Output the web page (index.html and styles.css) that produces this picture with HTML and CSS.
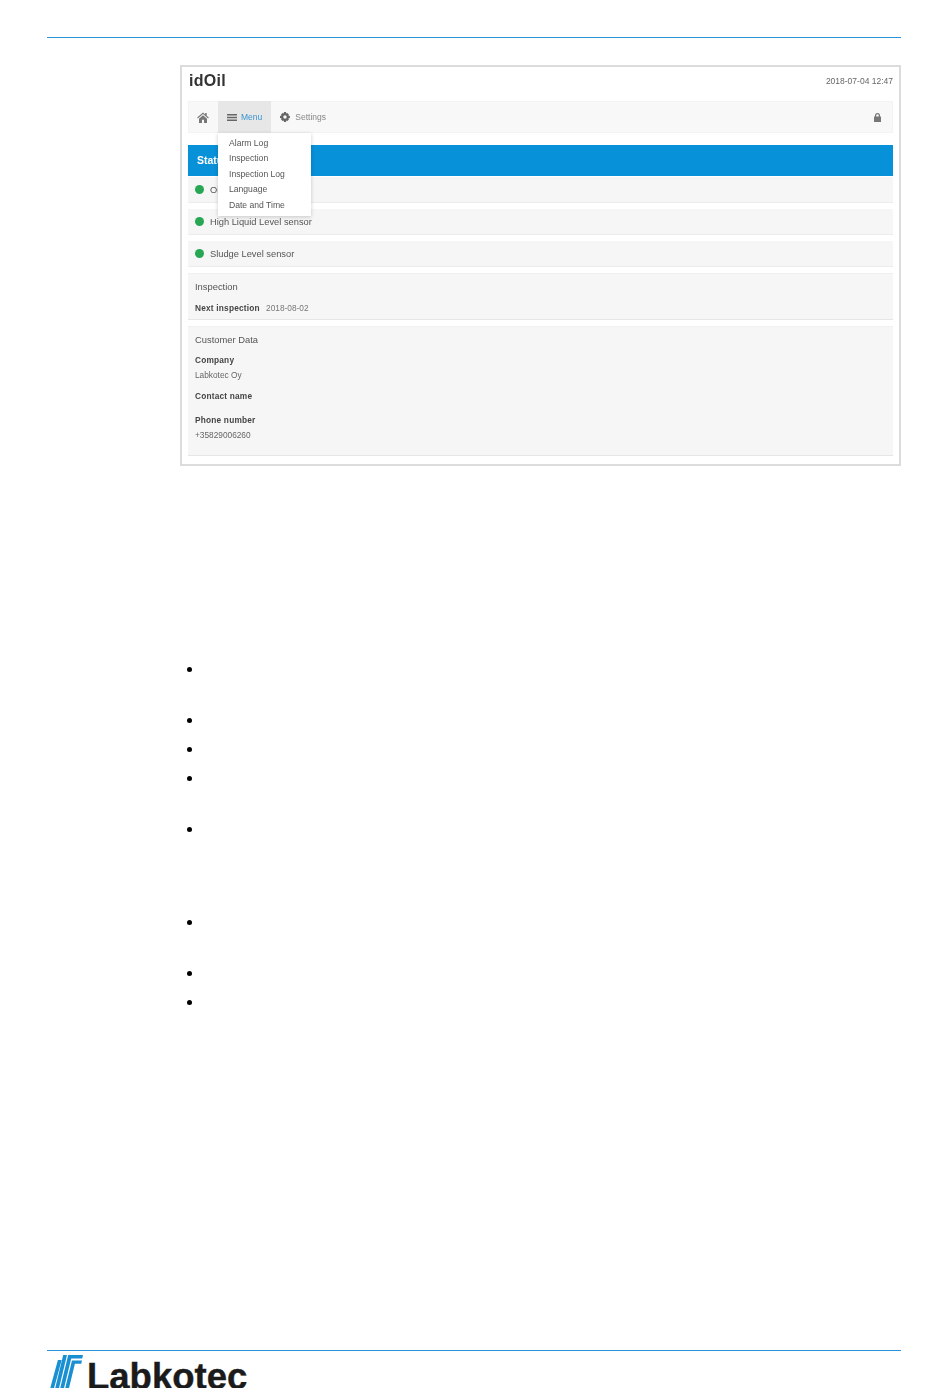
FILE: index.html
```html
<!DOCTYPE html>
<html lang="en">
<head>
    <meta charset="UTF-8">
    <meta name="viewport" content="width=device-width, initial-scale=1.0">
    <title>idOil</title>
    <link rel="stylesheet" href="styles.css">
</head>
<body>
    <div class="page">
        <div class="top-rule"></div>

        <div class="shot">
            <div class="shot-head">
                <span class="brand">idOil</span>
                <span class="clock">2018-07-04 12:47</span>
            </div>

            <div class="nav">
                <span class="nav-home">
                    <svg width="12" height="11" viewBox="0 0 12 11"><path fill="#777" d="M6 0.6 0.2 5.6l.7.8L6 2.1l5.1 4.3.7-.8L9.7 3.8V1H8.2v1.500zM2 6.700V11h3V7.800h2V11h3V6.700L6 3.300z"/></svg>
                </span>
                <span class="nav-item active">
                    <svg width="10" height="7" viewBox="0 0 10 7"><path fill="#666" d="M0 0h10v1.600H0zM0 2.700h10v1.600H0zM0 5.400h10V7H0z"/></svg>
                    Menu
                </span>
                <span class="nav-item">
                    <svg width="10" height="10" viewBox="0 0 10 10"><path fill="#666" fill-rule="evenodd" d="M4 0h2l.3 1.400 1-.5 1.600 1.500-.6 1.100L9.900 4v2l-1.600.4.6 1.100-1.500 1.600-1.100-.6L6 10H4l-.3-1.500-1.100.6L1 7.500l.7-1.100L0 6V4l1.600-.4L1 2.400 2.600.9l1.100.5zM5 3.300a1.700 1.700 0 1 0 0 3.400 1.700 1.700 0 0 0 0-3.400z"/></svg>
                    Settings
                </span>
                <span class="nav-lock">
                    <svg width="7" height="9" viewBox="0 0 7 9"><path fill="#777" fill-rule="evenodd" d="M1 3.600V2.500a2.500 2.500 0 0 1 5 0v1.100h1V9H0V3.600zM2.200 3.600h2.600V2.500a1.300 1.300 0 0 0-2.600 0z"/></svg>
                </span>

                <div class="dropdown">
                    <a>Alarm Log</a>
                    <a>Inspection</a>
                    <a>Inspection Log</a>
                    <a>Language</a>
                    <a>Date and Time</a>
                </div>
            </div>

            <div class="status-bar">Status</div>
            <div class="sensor first"><i class="led"></i>Oil Level sensor</div>
            <div class="sensor"><i class="led"></i>High Liquid Level sensor</div>
            <div class="sensor"><i class="led"></i>Sludge Level sensor</div>

            <div class="panel inspection">
                <h4>Inspection</h4>
                <p><b>Next inspection</b> <span class="next-date">2018-08-02</span></p>
            </div>

            <div class="panel customer">
                <h4>Customer Data</h4>
                <dl>
                    <dt>Company</dt>
                    <dd>Labkotec Oy</dd>
                    <dt>Contact name</dt>
                    <dd></dd>
                    <dt>Phone number</dt>
                    <dd>+35829006260</dd>
                </dl>
            </div>
        </div>

        <ul class="bullets">
            <li class="h51"></li>
            <li class="h29"></li>
            <li class="h29"></li>
            <li class="h51"></li>
            <li class="h93"></li>
            <li class="h51"></li>
            <li class="h29"></li>
            <li class="h29"></li>
        </ul>

        <div class="footer">
            <div class="logo">
                <svg width="33" height="34" viewBox="0 0 33 34">
                    <path fill="#1a8fd1" d="M7.900 5h3.800L3.800 34H0z"/>
                    <path fill="#1a8fd1" d="M13.200 0h3.800L8.800 34H5z"/>
                    <path fill="#1a8fd1" d="M18.200 0H33l-.8 3.500H21.200L13.800 34H10z"/>
                    <path fill="#1a8fd1" d="M22 5.500h10l-.8 3.200h-6.300L18.800 34H15z"/>
                </svg>
                <span class="logo-text">Labkotec</span>
            </div>
        </div>
    </div>
</body>
</html>
```

FILE: styles.css
```css
html, body {
    margin: 0;
    height: 1388px;
    overflow: hidden;
    background-color: #ffffff;
}
body {
    font-family: "Liberation Sans", Arial, sans-serif;
    color: #555;
}
.page {
    padding: 37px 49px 0 47px;
}
.top-rule {
    border-top: 1px solid #2a93d5;
    margin-bottom: 27px;
}

/* embedded screenshot */
.shot {
    margin-left: 133px;
    height: 397px;
    padding: 0 6px;
    border: 2px solid #dcdcdc;
    filter: blur(0.4px);
}
.shot-head {
    display: flex;
    justify-content: space-between;
    align-items: center;
    height: 28px;
    margin-bottom: 6px;
}
.brand {
    font-size: 16px;
    font-weight: bold;
    letter-spacing: 0.3px;
    color: #333;
    padding-left: 1px;
}
.clock {
    font-size: 8.500px;
    color: #666;
}
.nav {
    position: relative;
    display: flex;
    align-items: stretch;
    height: 32px;
    background-color: #f8f8f8;
    box-shadow: inset 0 0 0 1px #f3f3f3;
    font-size: 8.500px;
    color: #888;
}
.nav-home {
    display: flex;
    align-items: center;
    width: 30px;
    padding-left: 9px;
    box-sizing: border-box;
}
.nav-item {
    display: flex;
    align-items: center;
    gap: 5px;
    padding: 0 9px;
}
.nav-item.active {
    gap: 4px;
    background-color: #e7e7e7;
    color: #3a94cf;
}
.nav-lock {
    margin-left: auto;
    display: flex;
    align-items: center;
    padding-right: 12px;
}
.dropdown {
    position: absolute;
    left: 30px;
    top: 32px;
    width: 93px;
    height: 83px;
    box-sizing: border-box;
    padding: 3px 0 0 11px;
    background-color: #fff;
    box-shadow: 0 1px 4px rgba(0, 0, 0, 0.2);
    z-index: 2;
}
.dropdown a {
    display: block;
    height: 15.400px;
    line-height: 15.400px;
    font-size: 8.600px;
    color: #555;
}
.status-bar {
    margin-top: 12px;
    height: 31px;
    line-height: 31px;
    padding-left: 9px;
    background-color: #0791d9;
    color: #fff;
    font-size: 10.500px;
    font-weight: bold;
}
.sensor {
    display: flex;
    align-items: center;
    height: 26px;
    margin-top: 6px;
    padding-left: 7px;
    background-color: #f6f6f6;
    border-bottom: 1px solid #ececec;
    box-sizing: border-box;
    font-size: 9.300px;
    color: #555;
}
.sensor.first {
    margin-top: 1px;
}
.led {
    width: 9px;
    height: 9px;
    margin-right: 6px;
    border-radius: 50%;
    background-color: #27a653;
}
.panel {
    margin-top: 6px;
    padding: 7px 7px 0;
    background-color: #f6f6f6;
    border-top: 1px solid #f0f0f0;
    border-bottom: 1px solid #e6e6e6;
    box-sizing: border-box;
}
.panel h4 {
    margin: 0;
    font-size: 9.400px;
    font-weight: normal;
    line-height: 12px;
    color: #555;
}
.panel p {
    margin: 10px 0 0;
    font-size: 8.300px;
    line-height: 11px;
}
.panel b, .panel dt {
    font-weight: bold;
    color: #444;
    letter-spacing: 0.2px;
}
.next-date {
    margin-left: 4px;
    color: #777;
}
.inspection {
    height: 47px;
}
.customer {
    height: 130px;
}
dl {
    margin: 9px 0 0;
    font-size: 8.300px;
    line-height: 11px;
}
dt {
    margin-bottom: 4px;
}
dd {
    margin: 0 0 10px;
    color: #666;
}
dd:empty {
    margin-bottom: 13px;
}

/* bullets of the text that is left blank */
.bullets {
    list-style: none;
    margin: 0;
    padding: 201px 0 0 140px;
}
.bullets li::before {
    content: "";
    display: block;
    width: 5px;
    height: 5px;
    border-radius: 50%;
    background-color: #000;
}
.h51 { height: 51px; }
.h29 { height: 29px; }
.h93 { height: 93px; }

.footer {
    position: absolute;
    left: 47px;
    right: 49px;
    top: 1350px;
    border-top: 1px solid #2a93d5;
}
.logo {
    display: flex;
    align-items: flex-start;
    padding: 4px 0 0 3px;
}
.logo-text {
    margin-left: 4px;
    margin-top: 1px;
    font-size: 36.500px;
    font-weight: bold;
    line-height: 42px;
    color: #1b1b1b;
    -webkit-text-stroke: 0.4px #1b1b1b;
}
```
